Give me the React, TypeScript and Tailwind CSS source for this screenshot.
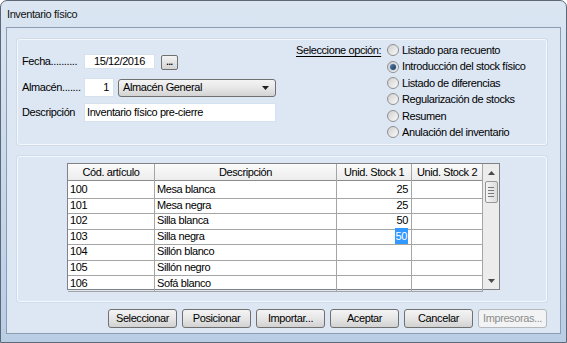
import React from 'react'

const FONT = "font-['Liberation_Sans',Arial,sans-serif] text-[11px] tracking-[-0.4px] text-black"

const ROWS: { code: string; desc: string; s1?: string; sel?: boolean }[] = [
    { code: '100', desc: 'Mesa blanca', s1: '25' },
    { code: '101', desc: 'Mesa negra', s1: '25' },
    { code: '102', desc: 'Silla blanca', s1: '50' },
    { code: '103', desc: 'Silla negra', s1: '50', sel: true },
    { code: '104', desc: 'Sillón blanco' },
    { code: '105', desc: 'Sillón negro' },
    { code: '106', desc: 'Sofá blanco' },
]

const OPTIONS = [
    'Listado para recuento',
    'Introducción del stock físico',
    'Listado de diferencias',
    'Regularización de stocks',
    'Resumen',
    'Anulación del inventario',
]

const BUTTONS = ['Seleccionar', 'Posicionar', 'Importar...', 'Aceptar', 'Cancelar']

function Radio({ checked }: { checked?: boolean }) {
    return (
        <span className="w-[12px] h-[12px] rounded-full border border-[#8e8f8f] bg-gradient-to-br from-[#d0d0d0] to-[#fafafa] flex items-center justify-center shrink-0">
            {checked && <span className="w-[6px] h-[6px] rounded-full bg-gradient-to-br from-[#5a7fa8] to-[#1b3a5e] ring-1 ring-[#cfd9e4]" />}
        </span>
    )
}

function Button({ label, disabled }: { label: string; disabled?: boolean }) {
    return (
        <div
            className={`w-[69px] h-[19px] rounded-[3px] border flex items-center justify-center ${disabled
                ? 'border-[#b5b9bd] bg-[#f2f3f4] text-[#8d8d8d]'
                : 'border-[#707070] bg-gradient-to-b from-[#f4f4f4] via-[#e6e6e6] to-[#d2d2d2]'
                }`}
        >
            {label}
        </div>
    )
}

export default function App() {
    return (
        <div className={`w-[567px] h-[343px] ${FONT}`}>
            <div className="w-full h-full rounded-t-[7px] border border-[#5c6878] bg-gradient-to-b from-[#dbe6f2] via-[#c9d9ec] to-[#b9cde4] flex flex-col">
                {/* Title bar */}
                <div className="h-[26px] pl-[6px] flex items-center text-[#111]">Inventario físico</div>

                {/* Client area */}
                <div className="ml-[5px] mr-[5px] mb-[8px] flex-1 border border-[#8b9db3] bg-[#dde7f4] flex flex-col">
                    {/* Top group */}
                    <div className="ml-[10px] mt-[11px] w-[530px] h-[106px] rounded-[3px] border border-[#f4f7fb] shadow-[0_0_0_1px_#d0dceb] flex">
                        <div className="pl-[4px] pt-[12px] w-[258px] flex flex-col">
                            <div className="h-[18px] flex items-center">
                                <span className="w-[62px]">Fecha..........</span>
                                <div className="w-[71px] h-[15px] bg-white border border-[#d5e1ef] flex items-center justify-center">15/12/2016</div>
                                <div className="ml-[6px] mt-[3px] w-[17px] h-[15px] rounded-[2px] border border-[#707070] bg-gradient-to-b from-[#f4f4f4] to-[#d4d4d4] flex items-end justify-center pb-[2px] leading-none text-[9px] font-bold">...</div>
                            </div>
                            <div className="mt-[8px] h-[19px] flex items-center">
                                <span className="w-[62px]">Almacén.......</span>
                                <div className="w-[30px] h-[19px] bg-white border border-[#d5e1ef] flex items-center justify-end pr-[4px]">1</div>
                                <div className="ml-[4px] w-[158px] h-[18px] rounded-[3px] border border-[#707070] bg-gradient-to-b from-[#f4f4f4] via-[#e7e7e7] to-[#d3d3d3] flex items-center pl-[4px] pr-[6px]">
                                    <span className="flex-1">Almacén General</span>
                                    <svg width="7" height="4" viewBox="0 0 7 4">
                                        <path d="M0 0h7L3.5 4z" fill="#222" />
                                    </svg>
                                </div>
                            </div>
                            <div className="mt-[6px] h-[19px] flex items-center">
                                <span className="w-[62px]">Descripción</span>
                                <div className="w-[192px] h-[19px] bg-white border border-[#d5e1ef] flex items-center pl-[2px]">Inventario físico pre-cierre</div>
                            </div>
                        </div>

                        <div className="ml-[20px] pt-[2px] flex">
                            <div className="w-[91px] h-[16.4px] flex items-center">
                                <span className="underline underline-offset-[2px]">Seleccione opción:</span>
                            </div>
                            <div className="flex flex-col">
                                {OPTIONS.map((o, i) => (
                                    <div key={o} className="h-[16.4px] flex items-center gap-[3px]">
                                        <Radio checked={i === 1} />
                                        <span>{o}</span>
                                    </div>
                                ))}
                            </div>
                        </div>
                    </div>

                    {/* Grid group */}
                    <div className="ml-[10px] mt-[11px] w-[530px] h-[146px] rounded-[3px] border border-[#f4f7fb] shadow-[0_0_0_1px_#d0dceb] pl-[49px] pt-[6px]">
                        <div className="w-[433px] h-[127px] border border-[#7f8388] flex bg-white">
                            <div className="w-[415px] flex flex-col">
                                <div className="grid grid-cols-[87px_182px_75px_71px] h-[17px] bg-gradient-to-b from-[#fbfbfb] to-[#ececec] border-b border-[#8c8c8c]">
                                    {['Cód. artículo', 'Descripción', 'Unid. Stock 1', 'Unid. Stock 2'].map(h => (
                                        <div key={h} className="border-r border-[#a5a5a5] flex items-center justify-center">{h}</div>
                                    ))}
                                </div>
                                {ROWS.map(r => (
                                    <div key={r.code} className="grid grid-cols-[87px_182px_75px_71px] h-[15.6px]">
                                        <div className="border-r border-b border-[#a5a5a5] pl-[2px] flex items-center">{r.code}</div>
                                        <div className="border-r border-b border-[#a5a5a5] pl-[2px] flex items-center">{r.desc}</div>
                                        <div className="border-r border-b border-[#a5a5a5] pr-[3px] flex items-center justify-end">
                                            {r.s1 && (
                                                <span className={r.sel ? 'bg-[#3399ff] text-white px-[1px]' : ''}>{r.s1}</span>
                                            )}
                                        </div>
                                        <div className="border-r border-b border-[#a5a5a5]" />
                                    </div>
                                ))}
                            </div>
                            <div className="w-[16px] bg-[#ececec] flex flex-col items-center">
                                <div className="h-[17px] w-full flex items-center justify-center">
                                    <svg width="7" height="4" viewBox="0 0 7 4">
                                        <path d="M3.5 0L7 4H0z" fill="#4a4a4a" />
                                    </svg>
                                </div>
                                <div className="w-[13px] h-[22px] rounded-[2px] border border-[#979797] bg-gradient-to-r from-[#f4f4f4] to-[#dcdcdc] flex flex-col items-center justify-center gap-[2px]">
                                    <span className="w-[6px] h-px bg-[#7a7a7a]" />
                                    <span className="w-[6px] h-px bg-[#7a7a7a]" />
                                    <span className="w-[6px] h-px bg-[#7a7a7a]" />
                                    <span className="w-[6px] h-px bg-[#7a7a7a]" />
                                </div>
                                <div className="flex-1" />
                                <div className="h-[16px] w-full flex items-center justify-center">
                                    <svg width="7" height="4" viewBox="0 0 7 4">
                                        <path d="M0 0h7L3.5 4z" fill="#4a4a4a" />
                                    </svg>
                                </div>
                            </div>
                        </div>
                    </div>

                    {/* Buttons */}
                    <div className="mt-[7px] pl-[101px] flex gap-[5px]">
                        {BUTTONS.map(b => (
                            <Button key={b} label={b} />
                        ))}
                        <Button label="Impresoras..." disabled />
                    </div>
                </div>
            </div>
        </div>
    )
}
